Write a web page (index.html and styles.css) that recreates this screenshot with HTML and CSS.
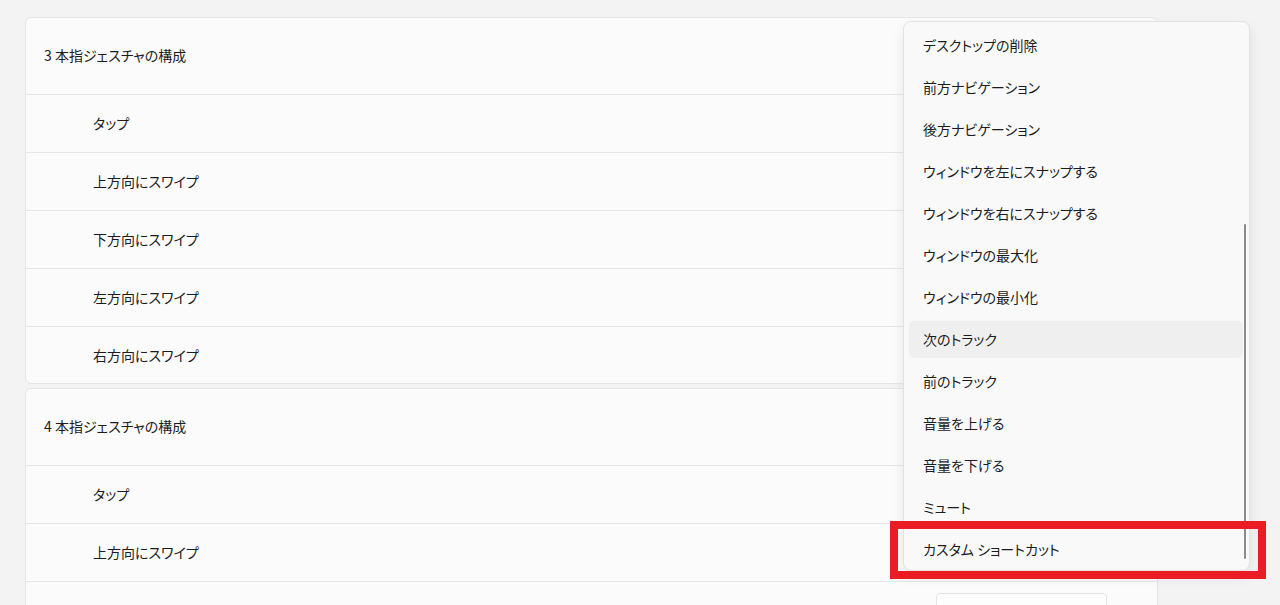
FILE: index.html
```html
<!DOCTYPE html>
<html lang="ja">
<head>
<meta charset="utf-8">
<title>タッチパッド ジェスチャ</title>
<link rel="stylesheet" href="styles.css">
</head>
<body>
<div class="page">
  <section class="card">
    <div class="card-head">3 本指ジェスチャの構成</div>
    <div class="row">タップ</div>
    <div class="row">上方向にスワイプ</div>
    <div class="row">下方向にスワイプ</div>
    <div class="row">左方向にスワイプ</div>
    <div class="row last">右方向にスワイプ</div>
  </section>
  <section class="card card-open">
    <div class="card-head">4 本指ジェスチャの構成</div>
    <div class="row">タップ</div>
    <div class="row">上方向にスワイプ</div>
    <div class="row last"><span class="combo"></span></div>
  </section>
</div>

<div class="dropdown">
  <ul class="menu">
    <li class="item">デスクトップの削除</li>
    <li class="item">前方ナビゲーション</li>
    <li class="item">後方ナビゲーション</li>
    <li class="item">ウィンドウを左にスナップする</li>
    <li class="item">ウィンドウを右にスナップする</li>
    <li class="item">ウィンドウの最大化</li>
    <li class="item">ウィンドウの最小化</li>
    <li class="item hover">次のトラック</li>
    <li class="item">前のトラック</li>
    <li class="item">音量を上げる</li>
    <li class="item">音量を下げる</li>
    <li class="item">ミュート</li>
    <li class="item">カスタム ショートカット</li>
  </ul>
  <div class="scrollbar"></div>
</div>
<div class="highlight-box"></div>
</body>
</html>
```

FILE: styles.css
```css
html, body {
  margin: 0;
  padding: 0;
}
body {
  background: #f3f3f3;
  width: 1280px;
  height: 605px;
  overflow: hidden;
  position: relative;
  font-family: "Noto Sans CJK JP", "Noto Sans", sans-serif;
  font-size: 14px;
  color: #1c1c1c;
  font-feature-settings: "palt" 1;
}
.page {
  padding: 17px 0 0 25px;
  display: flex;
  flex-direction: column;
  gap: 4px;
}
.card {
  width: 1133px;
  background: #fbfbfb;
  border: 1px solid #e5e5e5;
  border-radius: 6px;
  box-sizing: border-box;
}
.card-head {
  height: 77px;
  box-sizing: border-box;
  display: flex;
  align-items: center;
  padding: 0 0 2px 18px;
  border-bottom: 1px solid #e6e6e6;
}
.row {
  box-sizing: content-box;
  display: flex;
  align-items: center;
  padding: 0 0 1px 67px;
  height: 56px;
  border-bottom: 1px solid #e6e6e6;
  position: relative;
}
.row.last {
  border-bottom: none;
  height: 55px;
}
.card-open .row.last {
  height: 40px;
}
.combo {
  position: absolute;
  left: 910px;
  top: 11px;
  width: 171px;
  height: 32px;
  background: #fdfdfd;
  border: 1px solid #e3e3e3;
  border-radius: 4px;
  box-sizing: border-box;
}
.dropdown {
  position: absolute;
  left: 903px;
  top: 21px;
  width: 347px;
  height: 550px;
  box-sizing: border-box;
  background: #f9f9f9;
  border: 1px solid #e2e2e2;
  border-radius: 8px;
  box-shadow: 0 6px 14px rgba(0, 0, 0, 0.08);
}
.menu {
  list-style: none;
  margin: 0;
  padding: 2px 6px 0 5px;
}
.item {
  height: 42px;
  display: flex;
  align-items: center;
  padding-left: 14px;
  border-radius: 5px;
  position: relative;
  isolation: isolate;
}
.item.hover::before {
  content: "";
  position: absolute;
  left: 0;
  right: 0;
  top: 3px;
  bottom: 2px;
  background: #efefef;
  border-radius: 5px;
  z-index: -1;
}
.scrollbar {
  position: absolute;
  left: 340px;
  top: 202px;
  width: 2px;
  height: 335px;
  background: #8c8c8c;
  border-radius: 1px;
}
.highlight-box {
  position: absolute;
  left: 890px;
  top: 521px;
  width: 376px;
  height: 58px;
  box-sizing: border-box;
  border: 8px solid #ec1c24;
}
```
